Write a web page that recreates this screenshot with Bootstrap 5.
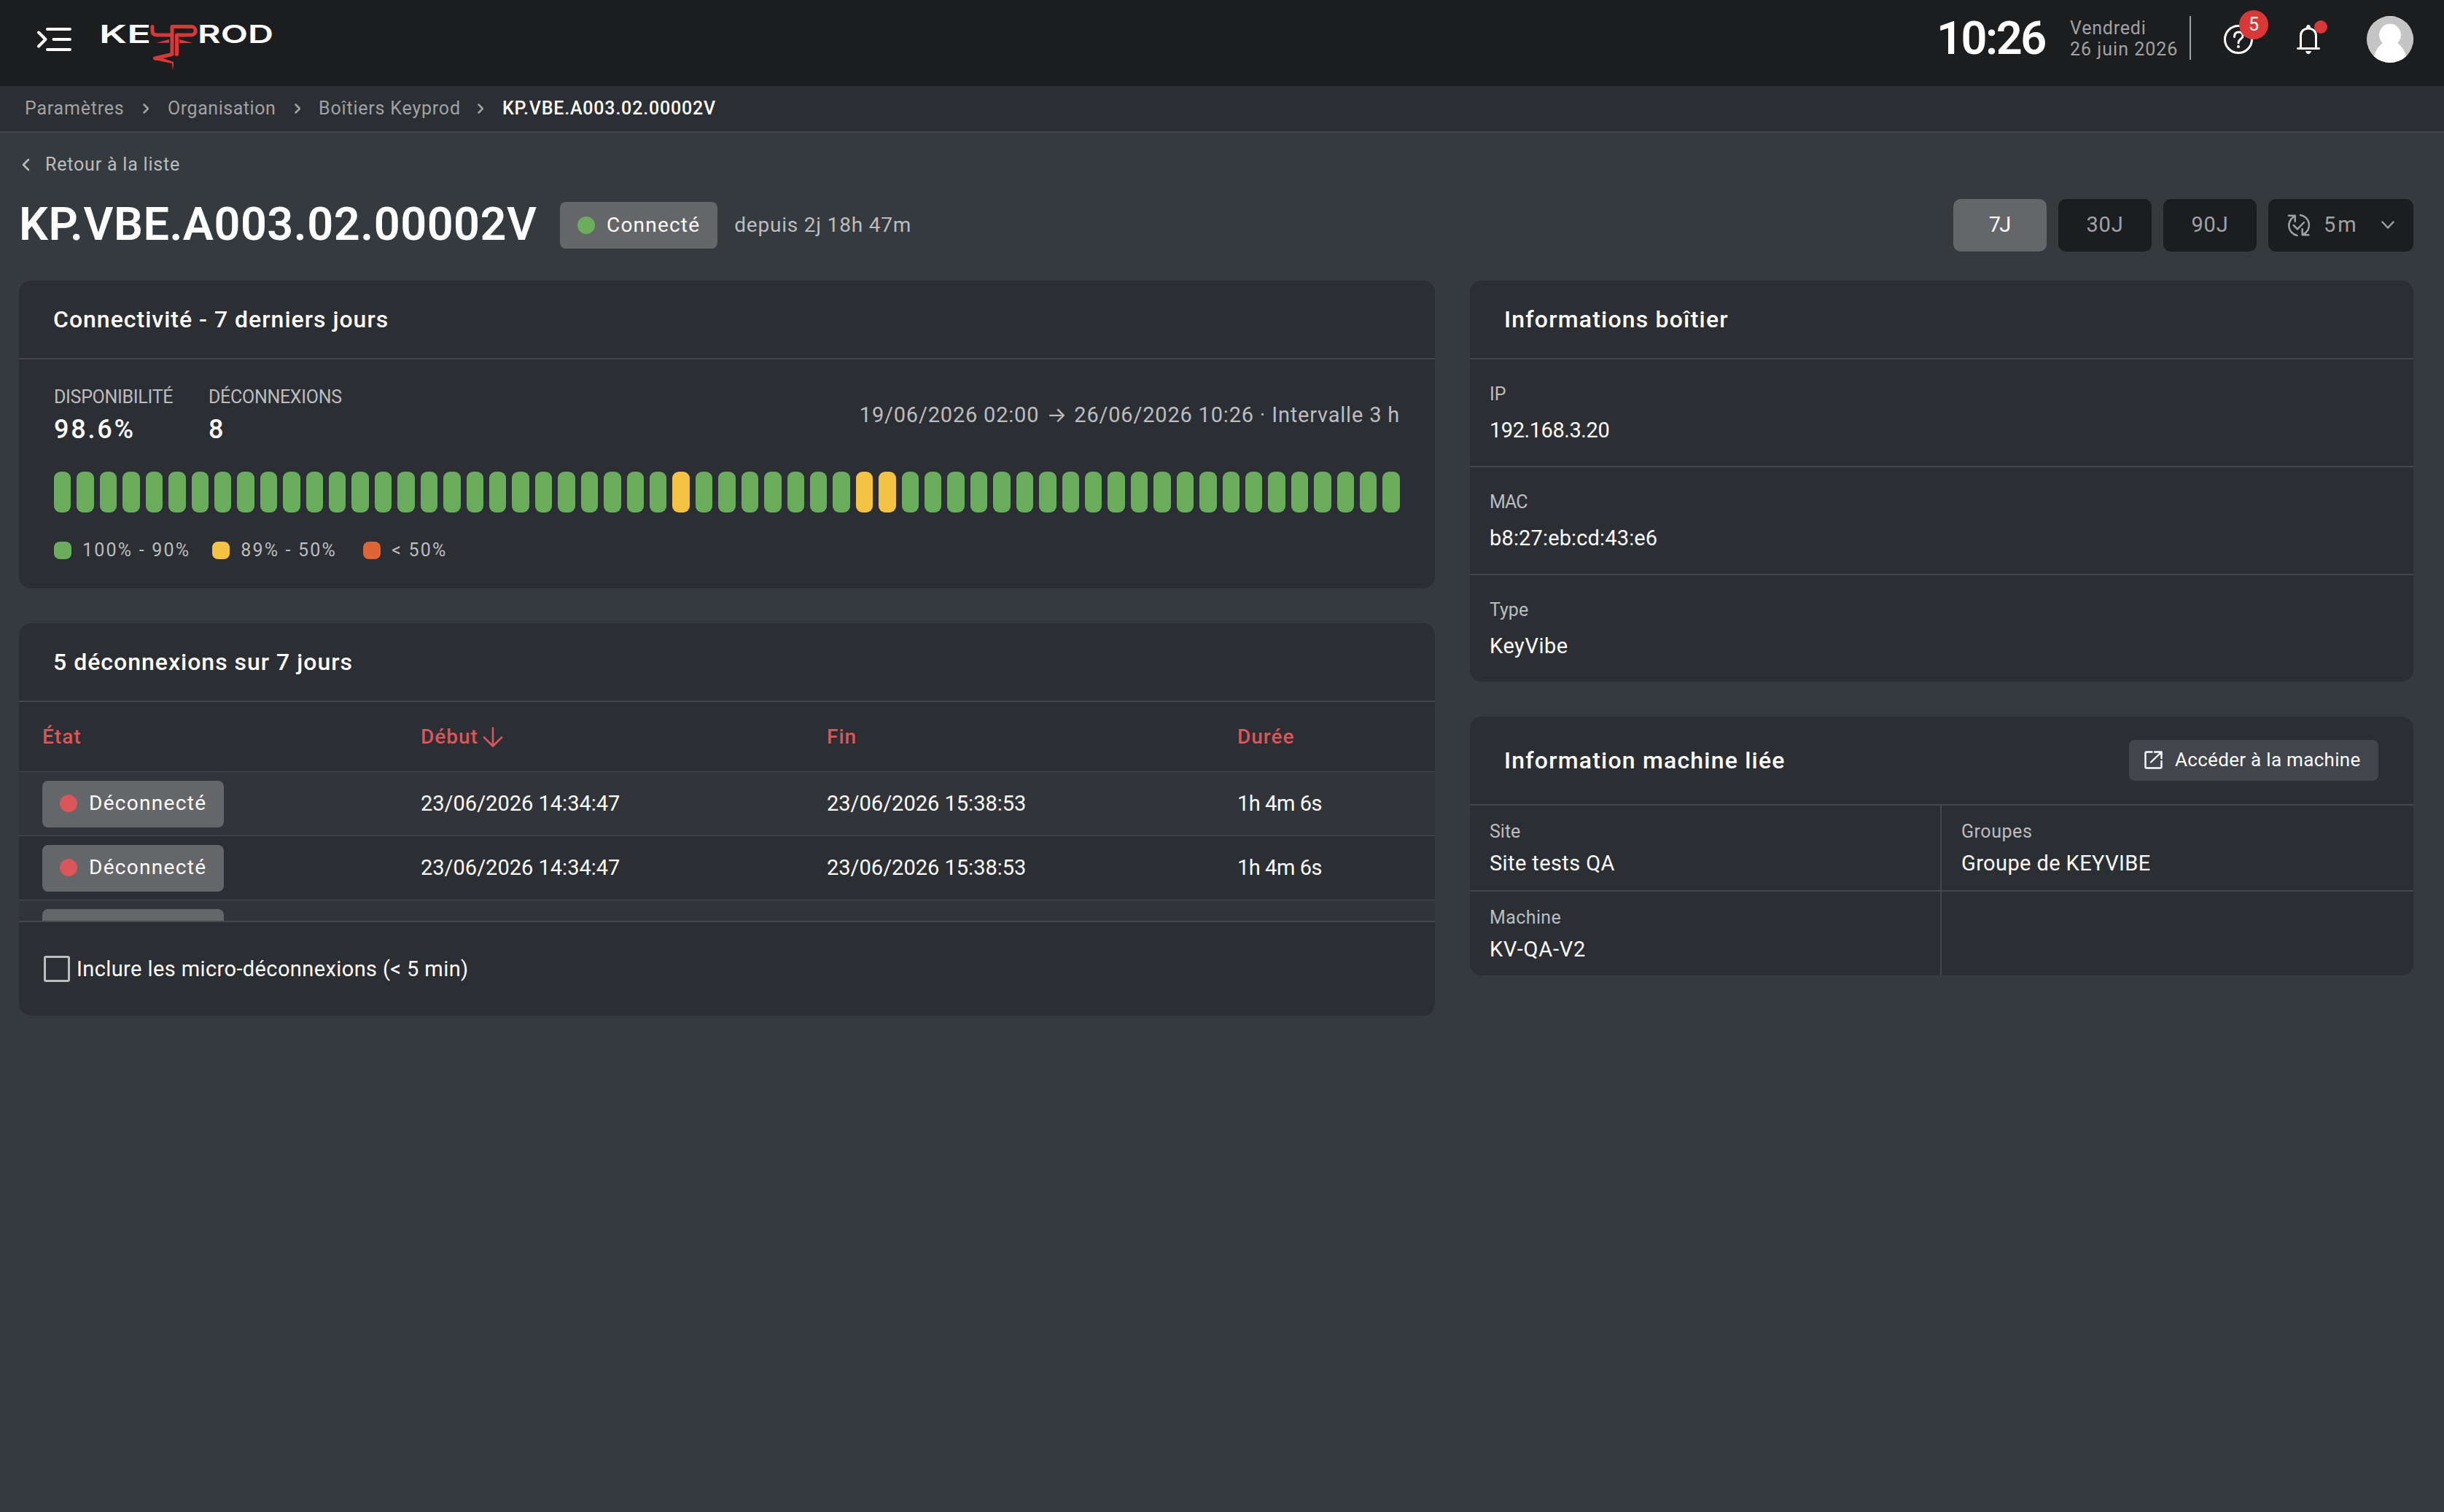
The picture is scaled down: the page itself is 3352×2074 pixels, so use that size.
<!DOCTYPE html>
<html lang="fr">
<head>
<meta charset="utf-8">
<meta name="viewport" content="width=device-width, initial-scale=1">
<title>KP.VBE.A003.02.00002V</title>
<link rel="stylesheet" href="https://cdn.jsdelivr.net/npm/bootstrap@5.3.0/dist/css/bootstrap.min.css">
<style>
:root { --line: #45474c; --panel: #2b2e32; --ink: #1c1d1f; --soft: #bcbdbf; --pill: #646669; }
body { font-family: Roboto, "Liberation Sans", sans-serif; background: #353a3e; color: #fff; font-size: 29px; line-height: 36px; min-height: 2074px; overflow: hidden; }
svg { display: block; flex: none; fill: none; stroke: currentColor; stroke-linecap: round; stroke-linejoin: round; }
.t25 { font-size: 25px; line-height: 30px; }
.t28 { font-size: 28px; }
.dim { color: #a1a2a4; }
.soft { color: var(--soft); }
.s-2 { letter-spacing: -.3px; } .s-4 { letter-spacing: -.45px; } .s1 { letter-spacing: .15px; } .s4 { letter-spacing: .4px; }
.s5 { letter-spacing: .55px; } .s8 { letter-spacing: .8px; } .s10 { letter-spacing: 1px; } .s12 { letter-spacing: 1.2px; }
.s24 { letter-spacing: 2.2px; } .s30 { letter-spacing: 2.8px; }
.topbar { height: 118px; background: var(--ink); padding: 0 42px 18px 50px; }
.clock { font-size: 63px; font-weight: 600; line-height: 76px; letter-spacing: -2.5px; width: 183px; margin-top: 5px; }
.day { font-size: 25px; line-height: 29px; width: 164px; margin-top: 5px; }
.rule { width: 2px; height: 60px; background: #a1a2a4; margin-right: 43px; margin-top: 4px; }
.icons { margin-top: 8px; }
.help { margin-right: 58px; }
.count { right: -19px; top: -18px; width: 40px; height: 40px; background: #d93838; font-size: 25px; line-height: 40px; }
.notif { right: -10px; top: -4px; width: 18px; height: 18px; background: #d93838; }
.crumbs { height: 64px; background: var(--panel); border-bottom: 2px solid var(--line); padding-left: 34px; }
main { padding: 29px 42px 0 26px; }
.back { height: 30px; gap: 21px; padding-left: 3px; margin-bottom: 32px; }
h1 { font-size: 63px; line-height: 69px; font-weight: 600; letter-spacing: .5px; margin: 0 31px 3px 0; width: 711px; white-space: nowrap; }
.state { height: 64px; border-radius: 8px; background: var(--pill); padding: 0 24px; gap: 16px; font-size: 28px; letter-spacing: 1.2px; }
.dot { width: 24px; height: 24px; border-radius: 50%; flex: none; }
.ok { background: #69ad5d; } .warn { background: #f5c344; } .bad { background: #df6436; } .off { background: #da565a; }
.period { width: 128px; height: 72px; border: 0; border-radius: 10px; background: var(--ink); color: #a1a2a4; font-size: 29px; }
.period.active { background: var(--pill) !important; color: #fff !important; letter-spacing: -2px; padding-right: 14px; }
.every { width: 199px; padding: 0 26px; display: flex; align-items: center; }
.panel { background: var(--panel); border-radius: 16px; overflow: hidden; }
.panel-head { height: 108px; border-bottom: 2px solid var(--line); padding: 0 48px 0 47px; }
.panel-head h2 { font-size: 32px; font-weight: 500; line-height: 40px; margin: 0; }
.left { width: 1942px; } .right { width: 1294px; }
.stack { gap: 48px; }
.uptime { padding: 37px 48px; }
.uptime .fig { font-size: 36px; font-weight: 500; line-height: 44px; margin-top: 7px; }
.arrow { display: inline-block; width: 32px; text-align: center; font-family: Inter, sans-serif; letter-spacing: 0; }
.bars { gap: 8px; margin-top: 36px; }
.bars i { flex: 1; height: 56px; border-radius: 9px; }
.legend { margin-top: 37px; gap: 32px; }
.legend span { gap: 15px; display: flex; align-items: center; }
.legend i { width: 24px; height: 24px; border-radius: 8px; }
.scroll { height: 300px; overflow: hidden; }
.log { width: 1942px; table-layout: fixed; border-collapse: separate; border-spacing: 0; }
.log th { height: 96px; padding: 0 32px; font-weight: 500; font-size: 28px; color: #da565a; border-bottom: 1px solid var(--line); }
.log td { height: 88px; padding: 0 32px; border-bottom: 1px solid #4b4d52; vertical-align: middle; }
.log td + td { padding: 0 32px 2px 33px; }
.log th + th { padding-left: 33px; }
.log tbody tr:nth-child(odd) td { background: #313439; }
.log .state { display: inline-flex; width: 249px; letter-spacing: 1.3px; vertical-align: middle; padding-bottom: 1px; }
.log-foot { height: 130px; border-top: 2px solid var(--line); padding-left: 34px; gap: 9px; }
.log-foot .tick[type=checkbox] { width: 36px; height: 36px; border: 3px solid #bcbdbf; border-radius: 3px; margin: 0; background: transparent; flex: none; }
.info { height: 148px; padding: 33px 26px 0 27px; border-bottom: 2px solid var(--line); }
.info:last-child { height: 146px; border: 0; }
.info div + div { margin-top: 16px; }
.linked .panel-head { height: 122px; }
.cell { height: 118px; padding: 21px 26px 0 27px; border-bottom: 2px solid var(--line); width: 647px; }
.cell:nth-child(odd) { border-right: 2px solid var(--line); padding-right: 0; }
.cell:nth-child(n+3) { height: 115px; border-bottom: 0; }
.cell div + div { margin-top: 10px; }
.goto { height: 56px; width: 342px; background: #42454b; color: #fff; border: 0; border-radius: 8px; font-size: 26px; letter-spacing: .3px; padding: 0 0 1px 21px; gap: 17px; white-space: nowrap; }
</style>
<script src="https://cdn.jsdelivr.net/npm/bootstrap@5.3.0/dist/js/bootstrap.bundle.min.js"></script>
</head>
<body>
<header class="topbar d-flex align-items-center">
  <svg class="mt-2" width="50" height="36" viewBox="50 36 50 36" stroke-width="4"><path d="M65 40H96M73.5 54H96M65 68H96M53 44.5L62.5 54L53 63.5"/></svg>
  <svg style="margin:22px 0 0 27px" width="260" height="76" viewBox="127 23 260 76">
    <g fill="#fff" stroke="none" font-family="Inter, Roboto, sans-serif" font-size="34" font-weight="600">
      <text x="136" y="59" textLength="71" lengthAdjust="spacingAndGlyphs">KE</text>
      <text x="271" y="59" textLength="104" lengthAdjust="spacingAndGlyphs">ROD</text>
    </g>
    <g stroke="#d93838" stroke-width="5">
      <path d="M209 36.5V42Q209 48 215 48H235M242.500 74.500V48H262.500A5.700 5.700 0 0 0 262.500 36.500H236V74.500L212.500 80"/>
      <g fill="#d93838" stroke="none"><path d="M214 58.700L232 54V58.700ZM246 54V59H264.500Z"/><path d="M212 77.500L222 79.500L238 85V89L236.800 97L236 87L211 82Z"/></g>
    </g>
  </svg>
  <div class="ms-auto d-flex align-items-center">
    <div class="clock">10:26</div>
    <div class="day dim s8">Vendredi<br><span class="s10">26 juin 2026</span></div>
    <div class="rule"></div>
    <div class="icons d-flex align-items-center">
      <div class="help position-relative">
        <svg width="44" height="44" viewBox="0 0 44 44" stroke-width="3"><circle cx="22" cy="22" r="18.500"/><path d="M16.500 18.500Q16.500 12 22.500 12T28 17.500C28 21.500 22 21.500 22 27"/><circle cx="22" cy="32" r="2" fill="currentColor" stroke="none"/></svg>
        <span class="count position-absolute rounded-circle text-center">5</span>
      </div>
      <div class="position-relative bell">
        <svg width="32" height="44" viewBox="0 0 32 44" stroke-width="3"><path d="M1.500 34.500H30.500M5.500 34V17C5.500 3.500 26.500 3.500 26.500 17V34"/><path d="M13 6.500a3 4.500 0 0 1 6 0ZM12 38H20Q19 42 16 42T12 38Z" fill="currentColor" stroke="none"/></svg>
        <span class="notif position-absolute rounded-circle"></span>
      </div>
      <svg style="margin-left:64px" width="64" height="64" viewBox="0 0 64 64" stroke="none"><defs><clipPath id="face"><circle cx="32" cy="32" r="32"/></clipPath></defs><g clip-path="url(#face)"><path fill="#c5c5c5" d="M0 0H64V64H0Z"/><ellipse cx="32" cy="26" rx="14.500" ry="15" fill="#fff"/><path fill="#fff" d="M24 36H40Q50 42 54 56V64H10V56Q14 42 24 36Z"/></g></svg>
    </div>
  </div>
</header>
<nav class="crumbs d-flex align-items-center t25 dim">
  <span class="s8" style="width:162px">Paramètres</span><svg width="8" height="14" viewBox="0 0 8 14" stroke-width="2.500"><path d="M1.500 1.500L7 7L1.500 12.500"/></svg>
  <span class="s5" style="margin-left:26px;width:174px">Organisation</span><svg width="8" height="14" viewBox="0 0 8 14" stroke-width="2.500"><path d="M1.500 1.500L7 7L1.500 12.500"/></svg>
  <span class="s8" style="margin-left:25px;width:218px">Boîtiers Keyprod</span><svg width="8" height="14" viewBox="0 0 8 14" stroke-width="2.500"><path d="M1.500 1.500L7 7L1.500 12.500"/></svg>
  <span class="s8 text-white" style="margin-left:26px;font-weight:500">KP.VBE.A003.02.00002V</span>
</nav>
<main>
  <a class="back d-flex align-items-center t25 soft s8 text-decoration-none"><svg width="12" height="18" viewBox="0 0 12 18" stroke-width="2.500"><path d="M10 2L3 9L10 16"/></svg>Retour à la liste</a>
  <div class="d-flex align-items-center" style="height:72px">
    <h1>KP.VBE.A003.02.00002V</h1>
    <span class="state d-flex align-items-center"><i class="dot ok"></i>Connecté</span>
    <span class="t28 soft s8" style="margin-left:23px">depuis 2j 18h 47m</span>
    <div class="ms-auto d-flex gap-3">
      <button class="btn period active">7J</button>
      <button class="btn period s8">30J</button>
      <button class="btn period s8">90J</button>
      <button class="btn period every"><svg width="32" height="32" viewBox="0 0 32 32" stroke-width="2.500"><path d="M13.500 30A14 14 0 0 1 9.500 4M2 2.700H10.700V10.700M18 2A14 14 0 0 1 22 28.500M29.300 29.300H20.700V21.300M8.700 16L14 21.300L23 12"/></svg><span style="margin-left:18px;letter-spacing:3px">5m</span><svg class="ms-auto" width="18" height="12" viewBox="0 0 18 12" stroke-width="2.500"><path d="M1.500 1.500L9 9.500L16.500 1.500"/></svg></button>
    </div>
  </div>
  <div class="d-flex justify-content-between align-items-start" style="margin-top:40px">
    <div class="left d-flex flex-column stack">
      <section class="panel">
        <div class="panel-head d-flex align-items-center"><h2 class="s10">Connectivité - 7 derniers jours</h2></div>
        <div class="uptime">
          <div class="d-flex align-items-center">
            <div style="width:212px"><div class="t25 soft s-2">DISPONIBILITÉ</div><div class="fig s30">98.6%</div></div>
            <div><div class="t25 soft s-2">DÉCONNEXIONS</div><div class="fig">8</div></div>
            <div class="ms-auto soft s8" style="padding-bottom:3px">19/06/2026 02:00 <span class="arrow">→</span> 26/06/2026 10:26 · Intervalle 3 h</div>
          </div>
          <div class="bars d-flex" id="bars"></div>
          <div class="legend d-flex t25 soft"><span class="s24"><i class="ok"></i>100% - 90%</span><span class="s24" style="margin-left:-2px"><i class="warn"></i>89% - 50%</span><span class="s24 ms-1"><i class="bad"></i>&lt; 50%</span></div>
        </div>
      </section>
      <section class="panel">
        <div class="panel-head d-flex align-items-center"><h2 class="s10">5 déconnexions sur 7 jours</h2></div>
        <div class="scroll">
          <table class="log">
            <colgroup><col style="width:518px"><col style="width:557px"><col style="width:563px"><col></colgroup>
            <thead><tr class="s10"><th>État</th><th><span class="d-flex align-items-center">Début<svg style="margin-left:6px" width="28" height="28" viewBox="0 0 28 28" stroke-width="2.600"><path d="M14 1.500V26M2 14.500L14 26.500L26 14.500"/></svg></span></th><th>Fin</th><th>Durée</th></tr></thead>
            <tbody>
              <tr><td><span class="state align-items-center"><i class="dot off"></i>Déconnecté</span></td><td>23/06/2026 14:34:47</td><td>23/06/2026 15:38:53</td><td class="s-4">1h 4m 6s</td></tr>
              <tr><td><span class="state align-items-center"><i class="dot off"></i>Déconnecté</span></td><td>23/06/2026 14:34:47</td><td>23/06/2026 15:38:53</td><td class="s-4">1h 4m 6s</td></tr>
              <tr><td><span class="state align-items-center"></span></td><td></td><td></td><td></td></tr>
            </tbody>
          </table>
        </div>
        <label class="log-foot d-flex align-items-center s4"><input class="form-check-input tick" type="checkbox">Inclure les micro-déconnexions (&lt; 5 min)</label>
      </section>
    </div>
    <div class="right d-flex flex-column stack">
      <section class="panel">
        <div class="panel-head d-flex align-items-center"><h2 class="s12">Informations boîtier</h2></div>
        <div>
          <div class="info"><div class="t25 soft">IP</div><div class="s-4">192.168.3.20</div></div>
          <div class="info"><div class="t25 soft" style="letter-spacing:-1px">MAC</div><div class="s1">b8:27:eb:cd:43:e6</div></div>
          <div class="info"><div class="t25 soft">Type</div><div class="s5">KeyVibe</div></div>
        </div>
      </section>
      <section class="panel linked">
        <div class="panel-head d-flex align-items-center justify-content-between"><h2 class="s12">Information machine liée</h2>
          <button class="btn goto d-flex align-items-center"><svg width="25" height="25" viewBox="0 0 25 25" stroke-width="2.400"><path d="M10.500 1.500H3Q1.500 1.500 1.500 3V22Q1.500 23.500 3 23.500H22Q23.500 23.500 23.500 22V14M9 15.500L23 2M14 1.500H23.500V10"/></svg>Accéder à la machine</button></div>
        <div class="d-flex flex-wrap">
          <div class="cell"><div class="t25 soft">Site</div><div class="s4">Site tests QA</div></div>
          <div class="cell"><div class="t25 soft s5">Groupes</div><div class="s4">Groupe de KEYVIBE</div></div>
          <div class="cell"><div class="t25 soft s4">Machine</div><div class="s8">KV-QA-V2</div></div>
          <div class="cell"></div>
        </div>
      </section>
    </div>
  </div>
</main>
<script>
const degraded = [27, 35, 36];
document.getElementById('bars').innerHTML = Array.from({ length: 59 }, (_, i) => `<i class="${degraded.includes(i) ? 'warn' : 'ok'}"></i>`).join('');
</script>
</body>
</html>
